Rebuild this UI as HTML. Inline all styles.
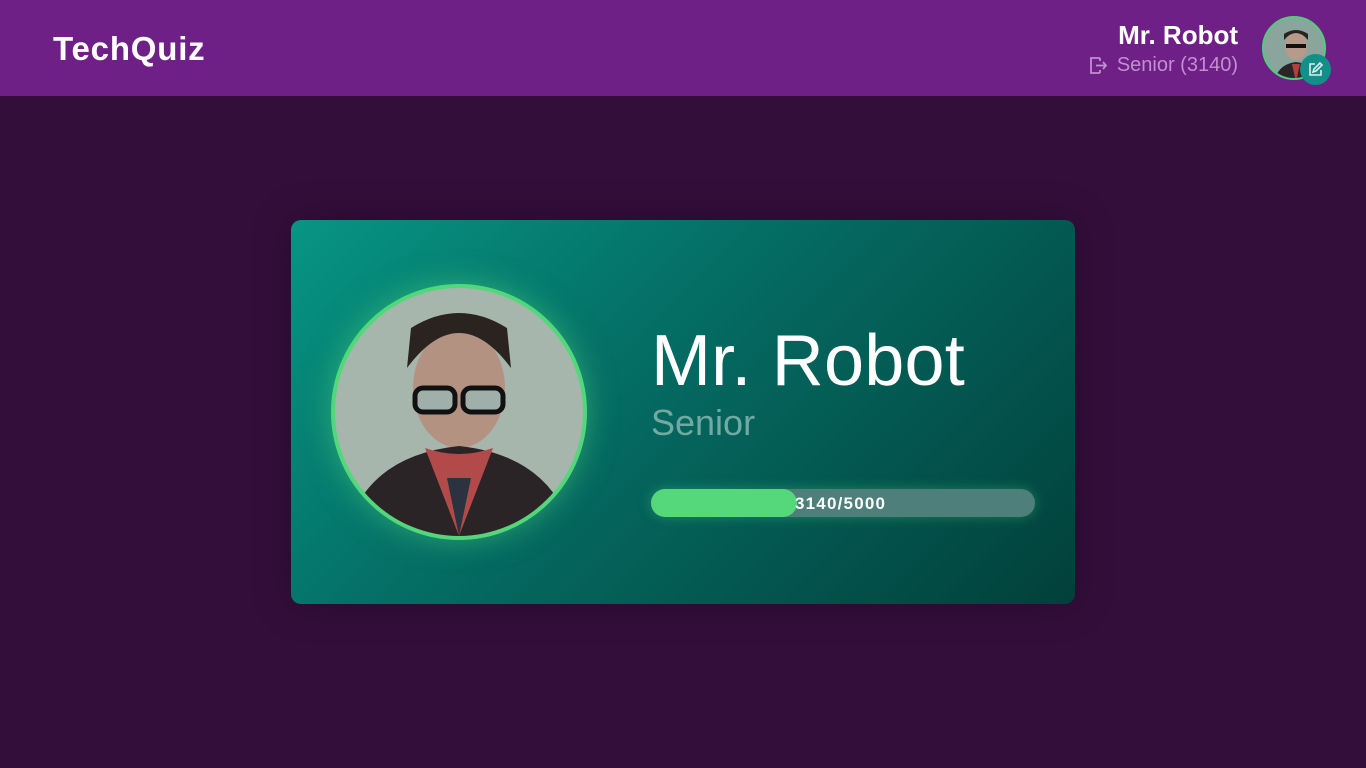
<!DOCTYPE html>
<html><head><meta charset="utf-8"><style>
*{margin:0;padding:0;box-sizing:border-box}
body{width:1366px;height:768px;background:#330e3a;font-family:"Liberation Sans",sans-serif;overflow:hidden;position:relative}
.hdr{position:absolute;left:0;top:0;width:1366px;height:96px;background:#6f2086}
.logo{position:absolute;left:53px;top:30px;color:#fff;font-weight:bold;font-size:33px;letter-spacing:0.8px}
.un{position:absolute;right:128px;top:20px;color:#fff;font-weight:bold;font-size:26px}
.ur{position:absolute;right:128px;top:54px;color:#c08fcf;font-size:20px}
.ic{position:absolute;left:1088px;top:55px}
.av{position:absolute;left:1262px;top:16px;width:64px;height:64px;border-radius:50%;border:2px solid #4fcf7a;overflow:hidden;background:#8aa59c}
.ed{position:absolute;left:1300px;top:54px;width:31px;height:31px;border-radius:50%;background:#138f8a}
.card{position:absolute;left:291px;top:220px;width:784px;height:384px;border-radius:10px;background:linear-gradient(135deg,#079583 0%,#046a62 45%,#02403a 100%);box-shadow:0 0 40px rgba(0,0,0,.25)}
.pic{position:absolute;left:40px;top:64px;width:256px;height:256px;border-radius:50%;border:4px solid #52d77a;box-shadow:0 0 30px rgba(82,215,122,.5);overflow:hidden;background:#a6b6ad}
.nm{position:absolute;left:360px;top:100px;color:#fff;font-size:72px;font-weight:300;letter-spacing:0.2px}
.lv{position:absolute;left:360px;top:182px;color:#74a9a2;font-size:36px}
.bar{position:absolute;left:360px;top:269px;width:384px;height:28px;border-radius:14px;background:#4e7f7a;box-shadow:0 0 12px rgba(82,215,122,.35)}
.fill{position:absolute;left:0;top:0;width:146px;height:28px;border-radius:14px;background:#55d87a}
.bt{position:absolute;left:144px;top:5px;color:#fff;font-weight:bold;font-size:17px;letter-spacing:1.2px}
</style></head><body>
<div class="hdr">
<div class="logo">TechQuiz</div>
<div class="un">Mr. Robot</div>
<div class="ur">Senior (3140)</div>
<svg class="ic" width="20" height="20" viewBox="0 0 20 20" fill="none" stroke="#c08fcf" stroke-width="1.8"><path d="M12 3H3v15h9M12 6V3M12 18v-3M8 10.5h10M15 7l3 3.5-3 3.5"/></svg>
<div class="av"><svg width="64" height="64" viewBox="0 0 64 64"><ellipse cx="32" cy="28" rx="11" ry="14" fill="#b89a8a"/><path d="M20 22q12-14 24 0v-6q-12-8-24 0z" fill="#2a2220"/><rect x="22" y="26" width="20" height="4" fill="#111"/><path d="M10 64q4-18 22-20q18 2 22 20z" fill="#2a2426"/><path d="M28 46l4 18 4-18z" fill="#b04040"/></svg></div>
<div class="ed"><svg width="31" height="31" viewBox="0 0 31 31" fill="none" stroke="#d8f0ee" stroke-width="1.6"><path d="M15 10H10v11h11v-5M13 18l1-3 6-6 2 2-6 6z"/></svg></div>
</div>
<div class="card">
<div class="pic"><svg width="248" height="248" viewBox="0 0 248 248"><ellipse cx="124" cy="100" rx="46" ry="60" fill="#b39282"/><path d="M72 80q52-70 104 0l-4-40q-48-30-96 0z" fill="#2b2320"/><rect x="80" y="100" width="40" height="24" rx="8" fill="#9fb0aa" stroke="#111" stroke-width="5"/><rect x="128" y="100" width="40" height="24" rx="8" fill="#9fb0aa" stroke="#111" stroke-width="5"/><path d="M10 248q20-80 114-90q94 10 114 90z" fill="#2a2426"/><path d="M90 160l34 88 34-88q-34 12-68 0z" fill="#b24a4a"/><path d="M112 190l12 58 12-58z" fill="#2c3340"/></svg></div>
<div class="nm">Mr. Robot</div>
<div class="lv">Senior</div>
<div class="bar"><div class="fill"></div><div class="bt">3140/5000</div></div>
</div>
</body></html>
